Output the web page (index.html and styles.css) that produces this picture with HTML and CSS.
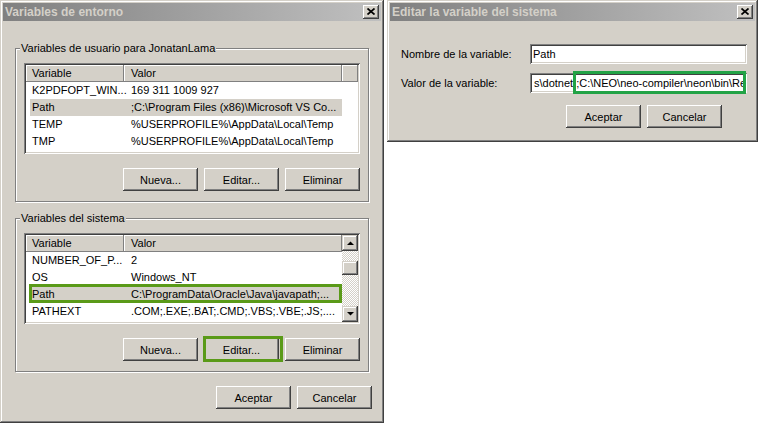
FILE: index.html
```html
<!DOCTYPE html>
<html>
<head>
<meta charset="utf-8">
<title>Variables de entorno</title>
<link rel="stylesheet" href="styles.css">
</head>
<body>
<div class="win win-env">
  <div class="titlebar">
    <span class="title">Variables de entorno</span>
    <span class="close"><svg width="8" height="7" viewBox="0 0 8 7"><path d="M0.5 0.5L7.5 6.5M7.5 0.5L0.5 6.5" stroke="#000" stroke-width="1.7"/></svg></span>
  </div>
  <div class="env-body">
    <div class="group">
      <span class="legend">Variables de usuario para JonatanLama</span>
      <div class="list">
        <div class="list-main">
          <div class="hdr"><div class="hc c1">Variable</div><div class="hc c2">Valor</div><div class="hc cf"></div></div>
          <div class="row"><div class="cells"><span class="v1">K2PDFOPT_WIN...</span><span class="v2">169 311 1009 927</span></div></div>
          <div class="row"><div class="cells sel"><span class="v1">Path</span><span class="v2">;C:\Program Files (x86)\Microsoft VS Co...</span></div></div>
          <div class="row"><div class="cells"><span class="v1">TEMP</span><span class="v2">%USERPROFILE%\AppData\Local\Temp</span></div></div>
          <div class="row"><div class="cells"><span class="v1">TMP</span><span class="v2">%USERPROFILE%\AppData\Local\Temp</span></div></div>
        </div>
      </div>
      <div class="btns">
        <div class="btn">Nueva...</div>
        <div class="btn">Editar...</div>
        <div class="btn">Eliminar</div>
      </div>
    </div>
    <div class="group group2">
      <span class="legend">Variables del sistema</span>
      <div class="list">
        <div class="list-main">
          <div class="hdr"><div class="hc c1">Variable</div><div class="hc c2">Valor</div></div>
          <div class="row"><div class="cells"><span class="v1">NUMBER_OF_P...</span><span class="v2">2</span></div></div>
          <div class="row"><div class="cells"><span class="v1">OS</span><span class="v2">Windows_NT</span></div></div>
          <div class="row"><div class="cells sel"><span class="v1">Path</span><span class="v2">C:\ProgramData\Oracle\Java\javapath;...</span></div><span class="mark-row"></span></div>
          <div class="row"><div class="cells"><span class="v1">PATHEXT</span><span class="v2">.COM;.EXE;.BAT;.CMD;.VBS;.VBE;.JS;....</span></div></div>
        </div>
        <div class="sbar">
          <div class="sb-btn"><svg width="7" height="4" viewBox="0 0 7 4"><polygon points="0,4 7,4 3.5,0.5" fill="#000"/></svg></div>
          <div class="sb-track"><div class="sb-thumb"></div></div>
          <div class="sb-btn"><svg width="7" height="4" viewBox="0 0 7 4"><polygon points="0,0 7,0 3.5,3.5" fill="#000"/></svg></div>
        </div>
      </div>
      <div class="btns">
        <div class="btn">Nueva...</div>
        <div class="btn marked">Editar...<span class="mark-btn"></span></div>
        <div class="btn">Eliminar</div>
      </div>
    </div>
    <div class="dlg-btns">
      <div class="btn">Aceptar</div>
      <div class="btn">Cancelar</div>
    </div>
  </div>
</div>

<div class="win win-edit">
  <div class="titlebar">
    <span class="title">Editar la variable del sistema</span>
    <span class="close"><svg width="8" height="7" viewBox="0 0 8 7"><path d="M0.5 0.5L7.5 6.5M7.5 0.5L0.5 6.5" stroke="#000" stroke-width="1.7"/></svg></span>
  </div>
  <div class="edit-body">
    <div class="frow">
      <span class="flabel">Nombre de la variable:</span>
      <div class="field"><div class="input">Path</div></div>
    </div>
    <div class="frow frow2">
      <span class="flabel">Valor de la variable:</span>
      <div class="field"><div class="input value"><span>s\dotnet</span><span class="tail">;C:\NEO\neo-compiler\neon\bin\Re</span></div><span class="mark-val"></span></div>
    </div>
    <div class="ebtns">
      <div class="btn">Aceptar</div>
      <div class="btn">Cancelar</div>
    </div>
  </div>
</div>
</body>
</html>
```
FILE: styles.css
```css
* { box-sizing: border-box; }
html, body { margin: 0; padding: 0; }
body {
  width: 765px;
  height: 426px;
  overflow: hidden;
  background: #fff;
  font-family: "Liberation Sans", Arial, sans-serif;
  font-size: 11px;
  color: #000;
  display: flex;
  align-items: flex-start;
  gap: 3px;
}
.win {
  background: #d4d0c8;
  padding: 3px;
  box-shadow: inset -1px -1px #404040, inset 1px 1px #d4d0c8, inset -2px -2px #808080, inset 2px 2px #fff;
  display: flex;
  flex-direction: column;
}
.win-env { width: 384px; height: 423px; }
.win-edit { width: 371px; height: 142px; }

.titlebar {
  height: 18px;
  flex: none;
  background: linear-gradient(to right, #808080, #c0c0c0);
  display: flex;
  align-items: center;
  justify-content: space-between;
  padding: 0 2px 0 2px;
}
.title { color: #d4d0c8; font-weight: bold; font-size: 12px; white-space: nowrap; }
.close {
  width: 16px;
  height: 14px;
  background: #d4d0c8;
  box-shadow: inset -1px -1px #404040, inset 1px 1px #fff, inset -2px -2px #808080, inset 2px 2px #d4d0c8;
  display: flex;
  align-items: center;
  justify-content: center;
  padding-bottom: 1px;
}

.env-body { padding: 27px 9px 0 12px; display: flex; flex-direction: column; }
.group {
  position: relative;
  width: 354px;
  height: 154px;
  border: 1px solid #808080;
  box-shadow: inset 1px 1px #fff, 1px 1px #fff;
  padding: 14px 8px 0 8px;
}
.group2 { margin-top: 16px; }
.legend {
  position: absolute;
  top: -8px;
  left: 4px;
  padding: 0 1px;
  line-height: 14px;
  background: #d4d0c8;
  white-space: nowrap;
}

.list {
  width: 336px;
  height: 91px;
  background: #fff;
  padding: 2px;
  box-shadow: inset 1px 1px #808080, inset -1px -1px #fff, inset 2px 2px #404040, inset -2px -2px #d4d0c8;
  display: flex;
}
.list-main { flex: 1; display: flex; flex-direction: column; min-width: 0; }
.hdr { height: 17px; display: flex; flex: none; }
.hc {
  background: #d4d0c8;
  box-shadow: inset -1px -1px #808080, inset 1px 1px #fff;
  line-height: 17px;
  white-space: nowrap;
}
.hc.c1 { width: 98px; padding-left: 6px; }
.hc.c2 { width: 218px; padding-left: 7px; }
.hc.cf { flex: 1; }
.row { height: 17px; line-height: 17px; position: relative; display: flex; flex: none; white-space: nowrap; }
.cells { margin-left: 4px; width: 312px; display: flex; }
.cells.sel { background: #d4d0c8; }
.v1 { width: 94px; padding-left: 2px; }
.v2 { padding-left: 7px; }
.mark-row {
  position: absolute;
  left: 3px;
  top: -2px;
  width: 313px;
  height: 19px;
  border: 3px solid #5a9a18;
}

.sbar { width: 16px; display: flex; flex-direction: column; flex: none; }
.sb-btn {
  width: 16px;
  height: 16px;
  flex: none;
  background: #d4d0c8;
  box-shadow: inset -1px -1px #404040, inset 1px 1px #d4d0c8, inset -2px -2px #808080, inset 2px 2px #fff;
  display: flex;
  align-items: center;
  justify-content: center;
}
.sb-track {
  flex: 1;
  background: repeating-conic-gradient(#fff 0 25%, #d4d0c8 0 50%) 0 0 / 2px 2px;
}
.sb-thumb {
  margin-top: 10px;
  width: 16px;
  height: 14px;
  background: #d4d0c8;
  box-shadow: inset -1px -1px #404040, inset 1px 1px #d4d0c8, inset -2px -2px #808080, inset 2px 2px #fff;
}

.btns { display: flex; justify-content: flex-end; gap: 6px; margin-top: 14px; }
.btn {
  position: relative;
  width: 75px;
  height: 23px;
  flex: none;
  background: #d4d0c8;
  box-shadow: inset -1px -1px #404040, inset 1px 1px #fff, inset -2px -2px #808080, inset 2px 2px #d4d0c8;
  display: flex;
  align-items: center;
  justify-content: center;
  white-space: nowrap;
}
.mark-btn {
  position: absolute;
  left: -1px;
  right: -4px;
  top: -2px;
  bottom: -1px;
  border: 3px solid #5a9a18;
}
.dlg-btns { display: flex; justify-content: flex-end; gap: 6px; margin-top: 14px; }

.edit-body { padding: 23px 7px 0 11px; display: flex; flex-direction: column; }
.frow { display: flex; align-items: center; }
.frow2 { margin-top: 9px; }
.flabel { width: 129px; flex: none; white-space: nowrap; }
.field { position: relative; width: 217px; height: 20px; }
.input {
  width: 100%;
  height: 100%;
  background: #fff;
  box-shadow: inset 1px 1px #808080, inset -1px -1px #fff, inset 2px 2px #404040, inset -2px -2px #d4d0c8;
  padding: 0 3px;
  line-height: 20px;
  white-space: nowrap;
  overflow: hidden;
}
.input.value { padding-left: 4px; }
.tail { margin-left: 3px; }
.mark-val {
  position: absolute;
  left: 43px;
  right: 1px;
  top: -2px;
  bottom: -1px;
  border: 3px solid #22a346;
}
.ebtns { display: flex; justify-content: flex-end; gap: 6px; margin-top: 12px; padding-right: 26px; }
```
